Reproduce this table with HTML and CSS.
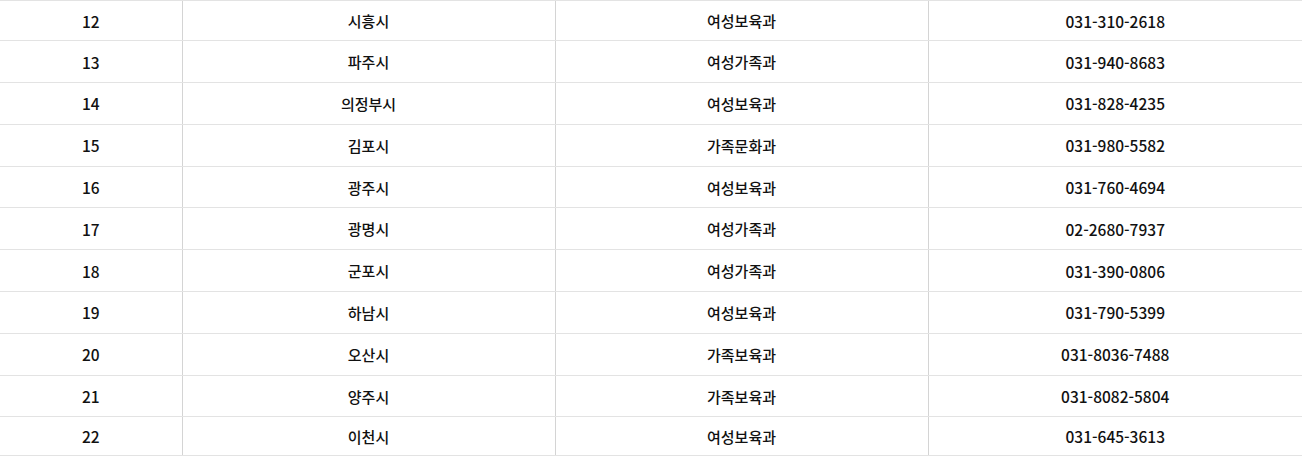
FILE: index.html
```html
<!DOCTYPE html>
<html lang="ko">
<head>
<meta charset="utf-8">
<link rel="stylesheet" href="styles.css">
</head>
<body>
<table class="list">
  <colgroup>
    <col class="c-no"><col class="c-city"><col class="c-dept"><col class="c-tel">
  </colgroup>
  <tbody>
    <tr class="first"><td class="num">12</td><td class="ko">시흥시</td><td class="ko">여성보육과</td><td class="num">031-310-2618</td></tr>
    <tr><td class="num">13</td><td class="ko">파주시</td><td class="ko">여성가족과</td><td class="num">031-940-8683</td></tr>
    <tr><td class="num">14</td><td class="ko">의정부시</td><td class="ko">여성보육과</td><td class="num">031-828-4235</td></tr>
    <tr><td class="num">15</td><td class="ko">김포시</td><td class="ko">가족문화과</td><td class="num">031-980-5582</td></tr>
    <tr><td class="num">16</td><td class="ko">광주시</td><td class="ko">여성보육과</td><td class="num">031-760-4694</td></tr>
    <tr><td class="num">17</td><td class="ko">광명시</td><td class="ko">여성가족과</td><td class="num">02-2680-7937</td></tr>
    <tr><td class="num">18</td><td class="ko">군포시</td><td class="ko">여성가족과</td><td class="num">031-390-0806</td></tr>
    <tr><td class="num">19</td><td class="ko">하남시</td><td class="ko">여성보육과</td><td class="num">031-790-5399</td></tr>
    <tr><td class="num">20</td><td class="ko">오산시</td><td class="ko">가족보육과</td><td class="num">031-8036-7488</td></tr>
    <tr><td class="num">21</td><td class="ko">양주시</td><td class="ko">가족보육과</td><td class="num">031-8082-5804</td></tr>
    <tr class="last"><td class="num">22</td><td class="ko">이천시</td><td class="ko">여성보육과</td><td class="num">031-645-3613</td></tr>
  </tbody>
</table>
</body>
</html>
```

FILE: styles.css
```css
html, body {
  margin: 0;
  padding: 0;
  background: #ffffff;
}

.list {
  width: 1302px;
  border-collapse: collapse;
  table-layout: fixed;
  font-family: "Noto Sans CJK KR", "Noto Sans", sans-serif;
  font-weight: 500;
  color: #111111;
}

.c-no { width: 182px; }
.c-city { width: 373px; }
.c-dept { width: 373px; }
.c-tel { width: 374px; }

.list td {
  height: 41.8px;
  padding: 0;
  text-align: center;
  vertical-align: middle;
  border-top: 1px solid #e3e3e3;
  border-bottom: 1px solid #e3e3e3;
  border-left: 1px solid #d4d4d4;
  box-sizing: border-box;
}

.list td:first-child { border-left: none; }

.list tr.first td { height: 40.3px; }
.list tr.last td { height: 38.5px; }

.num {
  font-size: 15.5px;
}

.ko {
  font-size: 15px;
}
```
